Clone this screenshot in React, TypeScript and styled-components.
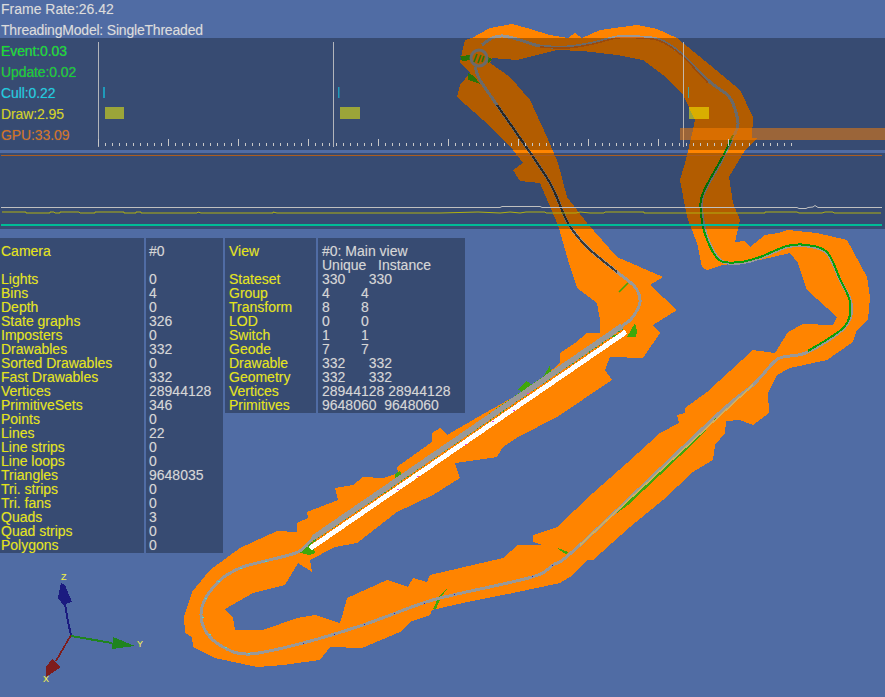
import React from 'react';
import styled, { createGlobalStyle } from 'styled-components';

const GlobalStyle = createGlobalStyle`
  html, body {
    margin: 0;
    padding: 0;
    background: #506ca4;
  }
`;

const Viewport = styled.div`
  position: relative;
  width: 885px;
  height: 697px;
  overflow: hidden;
  background: #506ca4;
  font-family: 'Liberation Sans', Arial, sans-serif;
  font-size: 14px;
  text-shadow: 0 0 1px rgba(210, 210, 210, 0.35);
`;

const Scene = styled.svg`
  position: absolute;
  inset: 0;
  display: block;
`;

const Hud = styled.div`
  position: relative;
  display: flex;
  flex-direction: column;
`;

const Header = styled.div`
  height: 39px;
  margin-top: -1px;
  padding-left: 1px;
  color: #dcdcdc;
  line-height: 21px;
`;

const ThreadingLine = styled.div`
  letter-spacing: -0.2px;
`;

const Panel = styled.div`
  background: rgba(0, 0, 0, 0.3);
`;

const TimingPanel = styled(Panel)`
  display: flex;
  height: 112px;
`;

const TimingLabels = styled.div`
  width: 98px;
  flex: none;
  padding: 3px 0 0 1px;
  box-sizing: border-box;
  line-height: 21px;
  letter-spacing: -0.1px;
`;

const TimingLabel = styled.div<{ $color: string }>`
  color: ${(p) => p.$color};
`;

const GraphPanel = styled(Panel)`
  height: 76px;
  margin-top: 3px;
`;

const Chart = styled.svg`
  display: block;
`;

const StatsRow = styled.div`
  display: flex;
  align-items: flex-start;
  gap: 2px;
  margin-top: 9px;
`;

const StatsColumn = styled(Panel)<{ $width: number; $value?: boolean }>`
  width: ${(p) => p.$width}px;
  box-sizing: border-box;
  padding: 6px 0 1px ${(p) => (p.$value ? 3 : 1)}px;
  color: ${(p) => (p.$value ? '#d6d6d6' : '#e4e414')};
  line-height: 14px;
  white-space: pre;
`;

const ViewColumn = styled(StatsColumn)`
  padding-left: 4px;
`;

const StatLine = styled.div`
  height: 14px;
`;

const cameraLabels = ['Camera', '', 'Lights', 'Bins', 'Depth', 'State graphs', 'Imposters', 'Drawables', 'Sorted Drawables', 'Fast Drawables', 'Vertices', 'PrimitiveSets', 'Points', 'Lines', 'Line strips', 'Line loops', 'Triangles', 'Tri. strips', 'Tri. fans', 'Quads', 'Quad strips', 'Polygons'];
const cameraValues = ['#0', '', '0', '4', '0', '326', '0', '332', '0', '332', '28944128', '346', '0', '22', '0', '0', '9648035', '0', '0', '3', '0', '0'];
const viewLabels = ['View', '', 'Stateset', 'Group', 'Transform', 'LOD', 'Switch', 'Geode', 'Drawable', 'Geometry', 'Vertices', 'Primitives'];
const viewValues = ['#0: Main view', 'Unique   Instance', '330      330', '4        4', '8        8', '0        0', '1        1', '7        7', '332      332', '332      332', '28944128 28944128', '9648060  9648060'];

const timings = [
  { label: 'Event:0.03', color: '#12e02e' },
  { label: 'Update:0.02', color: '#12d030' },
  { label: 'Cull:0.22', color: '#16cde0' },
  { label: 'Draw:2.95', color: '#d2d21c' },
  { label: 'GPU:33.09', color: '#d2701e' },
];

const ticks = Array.from({ length: 100 }, (_, i) => 98 + i * 7);
const frames = [
  { line: 98, cull: 103, cullWidth: 2, draw: 105, drawWidth: 19 },
  { line: 333, cull: 338, cullWidth: 1.5, draw: 340, drawWidth: 20 },
  { line: 683, cull: 688, cullWidth: 1, draw: 689, drawWidth: 20 },
];

const toPath = (pts: number[][]) => 'M' + pts.map((p) => p.join(' ')).join('L') + 'Z';
const toLine = (pts: number[][]) => pts.map((p) => p.join(',')).join(' ');

// catmull-rom through the points, the road is a smooth curve
const toCurve = (pts: number[][]) => {
  let d = `M${pts[0][0]} ${pts[0][1]}`;
  for (let i = 0; i < pts.length - 1; i++) {
    const p0 = pts[i - 1] || pts[i];
    const p1 = pts[i];
    const p2 = pts[i + 1];
    const p3 = pts[i + 2] || p2;
    const c1x = p1[0] + (p2[0] - p0[0]) / 6;
    const c1y = p1[1] + (p2[1] - p0[1]) / 6;
    const c2x = p2[0] - (p3[0] - p1[0]) / 6;
    const c2y = p2[1] - (p3[1] - p1[1]) / 6;
    d += `C${c1x} ${c1y} ${c2x} ${c2y} ${p2[0]} ${p2[1]}`;
  }
  return d;
};

const outer = [
  [465, 40], [472, 38], [490, 28], [512, 24], [527, 28], [550, 35], [568, 38], [575, 33], [582, 38], [600, 30],
  [637, 25], [657, 29], [677, 38], [683, 43], [710, 65], [740, 90], [753, 117], [752, 138], [757, 138], [745, 150],
  [729, 177], [733, 203], [740, 220], [735, 242], [745, 241], [750, 247], [765, 235], [778, 233], [788, 230], [817, 233],
  [847, 240], [867, 277], [870, 297], [868, 320], [857, 330], [853, 342], [827, 360], [790, 368], [777, 375], [768, 393],
  [769, 413], [753, 425], [740, 420], [726, 421], [725, 433], [715, 445], [713, 460], [693, 472], [663, 500], [630, 527],
  [593, 560], [587, 560], [573, 575], [560, 583], [513, 593], [463, 603], [432, 610], [430, 615], [410, 622], [400, 632],
  [362, 648], [330, 647], [320, 660], [283, 665], [257, 667], [215, 658], [193, 647], [192, 637], [185, 633], [184, 617],
  [192, 592], [210, 570], [240, 548], [277, 531], [297, 532], [297, 523], [308, 518], [307, 512], [338, 500], [335, 488],
  [353, 485], [363, 477], [383, 478], [398, 473], [397, 467], [432, 442], [432, 433], [440, 428], [447, 435], [485, 413],
  [517, 395], [540, 380], [560, 363], [560, 353], [575, 343], [587, 333], [600, 333], [600, 320], [597, 303], [577, 288],
  [568, 260], [558, 225], [540, 183], [520, 181], [513, 170], [523, 163], [513, 150], [483, 120], [457, 97], [460, 85],
  [470, 73], [460, 63], [462, 52],
];

const inner = [
  [492, 58], [517, 60], [537, 55], [557, 50], [583, 51], [617, 55], [643, 60], [663, 75], [683, 95], [695, 120],
  [693, 130], [685, 163], [680, 180], [687, 217], [697, 243], [702, 267], [707, 270], [723, 265], [737, 263], [760, 260],
  [790, 253], [798, 263], [807, 290], [837, 317], [833, 325], [803, 324], [788, 332], [775, 353], [752, 350], [742, 360],
  [707, 392], [685, 408], [685, 413], [677, 415], [679, 423], [660, 433], [627, 463], [593, 493], [557, 527], [533, 535],
  [533, 542], [542, 545], [518, 545], [503, 558], [430, 575], [427, 582], [413, 578], [408, 587], [387, 580], [347, 598],
  [343, 613], [340, 623], [315, 615], [297, 618], [263, 630], [235, 630], [233, 618], [225, 609], [253, 593], [285, 585],
  [298, 563], [312, 572], [310, 560], [335, 547], [357, 543], [397, 512], [433, 495], [460, 478], [455, 463], [497, 457],
  [503, 447], [518, 437], [557, 417], [612, 380], [605, 370], [610, 357], [643, 358], [660, 333], [653, 325], [677, 310],
  [650, 285], [663, 277], [617, 257], [587, 223], [567, 197], [558, 163], [547, 137], [530, 100], [510, 77], [490, 63],
];

const roadNorth = [[482, 45], [492, 38], [503, 36], [520, 40], [540, 46], [567, 47], [593, 43], [617, 37], [640, 37], [660, 40], [680, 53], [710, 82], [730, 98], [738, 123], [733, 137], [723, 158], [703, 195], [702, 213], [707, 237], [720, 260], [740, 263], [760, 258], [787, 247], [807, 246], [827, 253], [840, 280], [851, 303], [845, 327], [808, 352], [783, 357], [773, 363], [753, 385], [717, 415], [580, 545], [553, 565], [532, 577], [453, 595], [423, 603], [363, 625], [303, 643], [250, 654], [223, 647], [205, 630], [202, 607], [218, 582], [240, 568], [265, 561], [298, 552], [313, 538]];
const roadWest = [[622, 326], [632, 318], [640, 302], [635, 287], [617, 272], [587, 247], [568, 223], [550, 183], [520, 138], [497, 105], [480, 80], [475, 67]];
const darkStretch = [[497, 105], [520, 138], [550, 183], [568, 223], [587, 247], [617, 272]];
const greenStretch = [[733, 135], [723, 156], [703, 193], [701, 213], [706, 237], [719, 260], [740, 262], [760, 257], [787, 246], [807, 245], [827, 252], [840, 279], [850, 303], [844, 327], [808, 351]];
const brownStretch = [[540, 47], [567, 48], [593, 44], [617, 38], [640, 38], [660, 41], [680, 54], [708, 83]];

const navyDots = [[303, 643], [334, 634], [364, 624], [394, 613], [424, 603], [454, 594], [532, 576], [552, 565]];
const cyanDots = [[265, 561], [240, 568], [218, 581], [205, 598], [202, 617], [209, 634], [225, 647], [248, 653]];
const pinkDots = [[527, 393], [513, 410], [492, 421], [465, 444], [417, 476], [397, 489]];

const yellowGraph = [[2, 212], [26, 212], [26, 213], [50, 213], [50, 212], [54, 212], [55, 213], [60, 213], [60, 212], [79, 212], [80, 213], [95, 213], [95, 212], [124, 212], [124, 213], [136, 213], [136, 212], [141, 212], [141, 213], [197, 213], [198, 212], [201, 213], [273, 213], [273, 212], [277, 213], [440, 213], [478, 212], [500, 213], [510, 212], [520, 213], [526, 212], [545, 212], [546, 213], [576, 213], [580, 212], [590, 213], [604, 213], [605, 212], [644, 212], [644, 213], [765, 213], [765, 212], [797, 212], [799, 213], [822, 213], [825, 212], [833, 212], [834, 213], [881, 213]];
const whiteGraph = [[1, 207.5], [500, 207.5], [502, 206.5], [540, 206.5], [542, 207.5], [797, 207.5], [799, 208.5], [806, 208.5], [808, 207.5], [813, 207], [815, 205.5], [818, 207.5], [882, 207.5]];

export default function App() {
  return (
    <Viewport>
      <GlobalStyle />
      <Scene width="885" height="697" viewBox="0 0 885 697">
        <path d={toPath(outer) + toPath(inner)} fill="#ff8400" fillRule="evenodd" shapeRendering="crispEdges" />
        <g fill="#3fa80a" shapeRendering="crispEdges">
          <polygon points="460,56 471,55 472,60 462,61" />
          <polygon points="487,56 492,59 489,63 486,62" />
          <polygon points="468,73 474,76 480,84 468,80" />
          <polygon points="627,337 635,323 637,331 636,337" />
          <polygon points="611,336 617,334 614,339" />
          <polygon points="298,552 312,542 315,553 309,555" />
          <polygon points="312,538 318,537 314,543" />
          <polygon points="395,474 400,471 403,478 396,481" />
          <polygon points="518,390 526,381 533,385 525,392" />
          <polygon points="487,415 544,376 550,365 551,372 496,413" />
          <polygon points="433,609 439,596 447,589 441,597 436,609" />
          <polygon points="558,548 568,552 566,554 559,550" />
          <polygon points="717,417 700,433 660,471 628,501 617,513 628,505 660,475 700,437" />
        </g>
        <g fill="none" strokeLinejoin="round" shapeRendering="crispEdges">
          <path d={toCurve(roadNorth)} stroke="#999999" strokeWidth="3" />
          <path d={toCurve(roadWest)} stroke="#999999" strokeWidth="3" />
          <path d={toCurve(brownStretch)} stroke="#e06a10" strokeWidth="1.5" />
          <path d={toCurve(darkStretch)} stroke="#3a3a3a" strokeWidth="2" />
          <path d={toCurve(greenStretch)} stroke="#0aa00a" strokeWidth="2" />
        </g>
        <circle cx="479" cy="58" r="8" fill="none" stroke="#999999" strokeWidth="3" />
        <g stroke="#3fa80a" strokeWidth="1.6">
          <line x1="474" y1="62" x2="477" y2="54" />
          <line x1="478" y1="63" x2="481" y2="55" />
          <line x1="482" y1="62" x2="484" y2="56" />
          <line x1="619" y1="292" x2="628" y2="283" />
        </g>
        <g shapeRendering="crispEdges">
          <line x1="313" y1="538" x2="622" y2="326" stroke="#999999" strokeWidth="5.5" />
          <line x1="310" y1="548.5" x2="626" y2="331.8" stroke="#ffffff" strokeWidth="5" />
          <line x1="312" y1="542.5" x2="623" y2="329" stroke="#2a9a2a" strokeWidth="1" strokeDasharray="1 3" />
          <line x1="580" y1="545" x2="753" y2="385" stroke="#d0b060" strokeWidth="1.5" />
        </g>
        {navyDots.map(([x, y]) => <rect key={`n${x}`} x={x} y={y} width="1" height="1" fill="#1420c0" />)}
        {cyanDots.map(([x, y]) => <rect key={`c${x}`} x={x} y={y} width="2" height="1" fill="#40e0e0" />)}
        {pinkDots.map(([x, y]) => <rect key={`p${x}`} x={x} y={y} width="2" height="1" fill="#e040e0" />)}
        {/* axes */}
        <g shapeRendering="crispEdges">
          <polyline points="71,635 68,622 65,604" fill="none" stroke="#1b1b80" strokeWidth="2" />
          <polygon points="61,583 65,585 72,602 65,604 64,606 58,598" fill="#1b1b80" />
          <polyline points="71,635 56,661" fill="none" stroke="#7e1c1c" strokeWidth="1.7" />
          <polygon points="52,659 61,667 46,677 46,667" fill="#7e1c1c" />
          <polyline points="71,636 112,643" fill="none" stroke="#1f841f" strokeWidth="2" />
          <polygon points="113,637 135,646 112,649" fill="#1f841f" />
        </g>
        <g fill="#f0f040" fontFamily="'Liberation Sans', Arial, sans-serif" fontSize="9">
          <text x="61" y="580">Z</text>
          <text x="137" y="647">Y</text>
          <text x="43" y="682">X</text>
        </g>
      </Scene>
      <Hud>
        <Header>
          <div>Frame Rate:26.42</div>
          <ThreadingLine>ThreadingModel: SingleThreaded</ThreadingLine>
        </Header>
        <TimingPanel>
          <TimingLabels>
            {timings.map((t) => (
              <TimingLabel key={t.label} $color={t.color}>{t.label}</TimingLabel>
            ))}
          </TimingLabels>
          <Chart width="787" height="112" viewBox="98 38 787 112">
            {frames.map((f) => (
              <g key={f.line}>
                <rect x={f.line} y="42" width="1" height="105" fill="#c8c8c8" opacity="0.85" />
                <rect x={f.cull} y="87" width={f.cullWidth} height="11" fill="#16bcd8" opacity="0.7" />
                <rect x={f.draw} y="107" width={f.drawWidth} height="12" fill="#ffff00" opacity="0.5" />
              </g>
            ))}
            <rect x="680" y="128" width="205" height="12" fill="#ff7f00" opacity="0.5" />
            {ticks.map((x, i) => (
              <rect key={x} x={x} y={i % 10 === 0 ? 139 : 143} width="1" height={i % 10 === 0 ? 7 : 3} fill="#c8c8c8" />
            ))}
          </Chart>
        </TimingPanel>
        <GraphPanel>
          <Chart width="885" height="76" viewBox="0 153 885 76">
            <line x1="1" y1="155.5" x2="882" y2="155.5" stroke="#ab5d20" />
            <polyline points={toLine(whiteGraph)} fill="none" stroke="#c0c0c0" />
            <polyline points={toLine(yellowGraph)} fill="none" stroke="#b0b010" />
            <line x1="1" y1="225" x2="882" y2="225" stroke="#00bc96" strokeWidth="2" />
          </Chart>
        </GraphPanel>
        <StatsRow>
          <StatsColumn $width={144}>
            {cameraLabels.map((l, i) => <StatLine key={i}>{l}</StatLine>)}
          </StatsColumn>
          <StatsColumn $width={77} $value>
            {cameraValues.map((l, i) => <StatLine key={i}>{l}</StatLine>)}
          </StatsColumn>
          <ViewColumn $width={91}>
            {viewLabels.map((l, i) => <StatLine key={i}>{l}</StatLine>)}
          </ViewColumn>
          <ViewColumn $width={147} $value>
            {viewValues.map((l, i) => <StatLine key={i}>{l}</StatLine>)}
          </ViewColumn>
        </StatsRow>
      </Hud>
    </Viewport>
  );
}
